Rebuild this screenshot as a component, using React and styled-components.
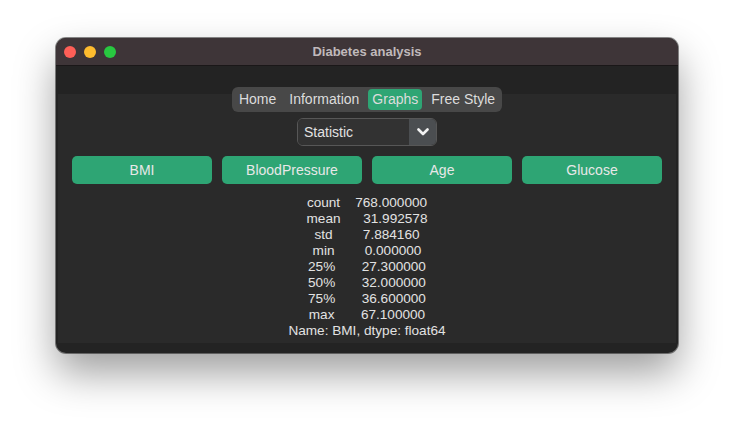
import React from 'react'
import styled, { createGlobalStyle } from 'styled-components'

const GlobalStyle = createGlobalStyle`
  html, body {
    margin: 0;
    padding: 0;
    background: #ffffff;
    overflow: hidden;
  }
  body {
    font-family: "Liberation Sans", Arial, sans-serif;
  }
`

const Page = styled.div`
  width: 734px;
  height: 428px;
  padding: 38px 0 0 56px;
  box-sizing: border-box;
`

const Window = styled.div`
  width: 622px;
  height: 315px;
  border-radius: 10px;
  overflow: hidden;
  background: #232323;
  display: flex;
  flex-direction: column;
  box-shadow: 0 0 0 1px rgba(0, 0, 0, 0.45), 0 20px 40px rgba(0, 0, 0, 0.38);
`

const TitleBar = styled.div`
  height: 28px;
  flex: none;
  background: #3e3538;
  border-bottom: 1px solid #1a1718;
  box-sizing: border-box;
  display: flex;
  align-items: center;
  padding-left: 8px;
  position: relative;
`

const Light = styled.span`
  width: 12px;
  height: 12px;
  border-radius: 50%;
  background: ${({ color }) => color};
  margin-left: ${({ first }) => (first ? '0' : '8px')};
`

const Title = styled.div`
  position: absolute;
  left: 0;
  right: 0;
  text-align: center;
  font-size: 13px;
  font-weight: bold;
  color: #c0b9bb;
`

const Body = styled.div`
  flex: 1;
  display: flex;
  flex-direction: column;
  padding: 28px 2px 10px;
`

const Pane = styled.div`
  flex: 1;
  background: #2a2a2a;
  display: flex;
  flex-direction: column;
  align-items: center;
`

const TabBar = styled.div`
  margin-top: -7px;
  display: flex;
  gap: 5px;
  padding: 2px 3px;
  background: #484848;
  border-radius: 6px;
`

const Tab = styled.div`
  height: 21px;
  line-height: 21px;
  padding: 0 4px;
  font-size: 14px;
  color: #dcdcdc;
  border-radius: 4px;
  background: ${({ active }) => (active ? '#2ea574' : 'transparent')};
`

const Combo = styled.div`
  margin-top: 6px;
  width: 140px;
  height: 28px;
  box-sizing: border-box;
  border: 1px solid #575757;
  border-radius: 6px;
  overflow: hidden;
  display: flex;
`

const ComboText = styled.div`
  flex: 1;
  background: #323232;
  color: #e2e2e2;
  font-size: 14px;
  line-height: 26px;
  padding-left: 6px;
`

const ComboArrow = styled.div`
  width: 27px;
  background: #4b4e51;
  display: flex;
  align-items: center;
  justify-content: center;
`

const ButtonRow = styled.div`
  margin-top: 10px;
  display: flex;
  gap: 10px;
`

const Button = styled.div`
  width: 140px;
  height: 28px;
  border-radius: 5px;
  background: #2ea574;
  color: #e8e8e8;
  font-size: 14px;
  line-height: 28px;
  text-align: center;
`

const Stats = styled.pre`
  margin: 11px 0 0;
  font-family: "Liberation Sans", Arial, sans-serif;
  font-size: 13.6px;
  line-height: 16px;
  color: #e2e2e2;
  text-align: center;
`

const lines = [
  'count    768.000000',
  'mean      31.992578',
  'std        7.884160',
  'min        0.000000',
  '25%       27.300000',
  '50%       32.000000',
  '75%       36.600000',
  'max       67.100000',
  'Name: BMI, dtype: float64',
]

const App = () => {
  return (
    <>
      <GlobalStyle />
      <Page>
        <Window>
          <TitleBar>
            <Light first color="#fe5f57" />
            <Light color="#febc2e" />
            <Light color="#28c840" />
            <Title>Diabetes analysis</Title>
          </TitleBar>
          <Body>
            <Pane>
              <TabBar>
                <Tab>Home</Tab>
                <Tab>Information</Tab>
                <Tab active>Graphs</Tab>
                <Tab>Free Style</Tab>
              </TabBar>
              <Combo>
                <ComboText>Statistic</ComboText>
                <ComboArrow>
                  <svg width="12" height="8" viewBox="0 0 12 8">
                    <path d="M1.5 1.5 L6 6 L10.5 1.5" fill="none" stroke="#f2f2f2" strokeWidth="2.6" strokeLinecap="round" strokeLinejoin="round" />
                  </svg>
                </ComboArrow>
              </Combo>
              <ButtonRow>
                <Button>BMI</Button>
                <Button>BloodPressure</Button>
                <Button>Age</Button>
                <Button>Glucose</Button>
              </ButtonRow>
              <Stats>{lines.join('\n')}</Stats>
            </Pane>
          </Body>
        </Window>
      </Page>
    </>
  )
}

export default App
